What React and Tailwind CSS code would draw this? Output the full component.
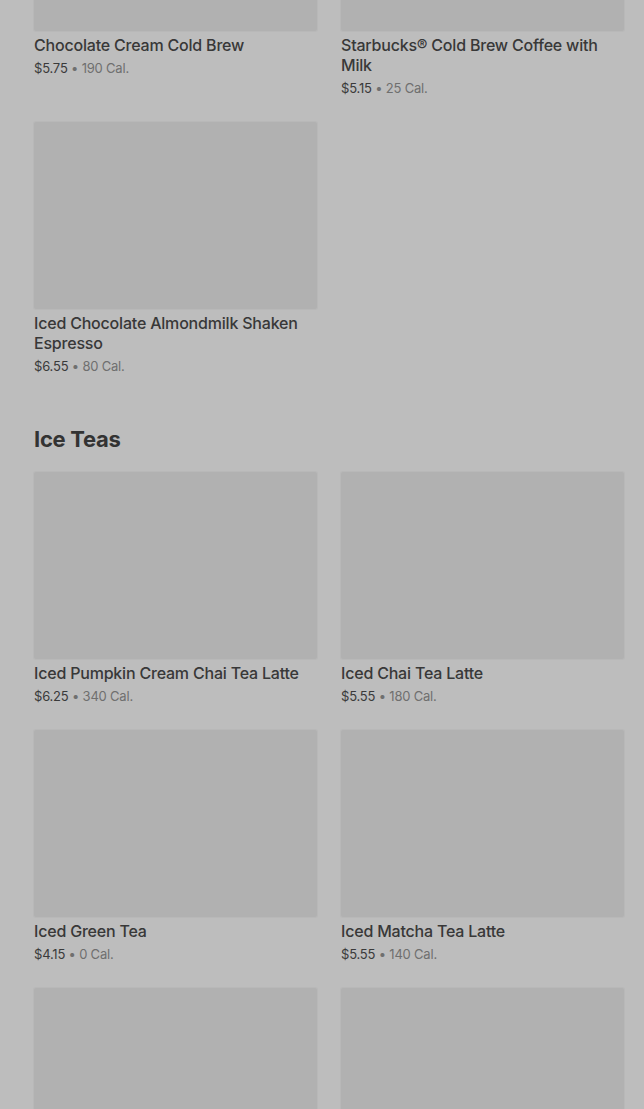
import React from "react";

const sections = [
    {
        title: null,
        items: [
            { name: "Chocolate Cream Cold Brew", price: "$5.75", cal: "190 Cal." },
            { name: "Starbucks® Cold Brew Coffee with Milk", price: "$5.15", cal: "25 Cal." },
            { name: "Iced Chocolate Almondmilk Shaken Espresso", price: "$6.55", cal: "80 Cal." },
        ],
    },
    {
        title: "Ice Teas",
        items: [
            { name: "Iced Pumpkin Cream Chai Tea Latte", price: "$6.25", cal: "340 Cal." },
            { name: "Iced Chai Tea Latte", price: "$5.55", cal: "180 Cal." },
            { name: "Iced Green Tea", price: "$4.15", cal: "0 Cal." },
            { name: "Iced Matcha Tea Latte", price: "$5.55", cal: "140 Cal." },
            { name: "Iced Black Tea", price: "$4.15", cal: "0 Cal." },
            { name: "Iced Peach Green Tea", price: "$4.75", cal: "60 Cal." },
        ],
    },
];

function ItemCard({ item }) {
    return (
        <div className="flex flex-col">
            <div className="h-[187px] w-full rounded-[2px] bg-[#b1b1b1] shadow-[0_0_0_1px_#b8b8b8]" />
            <h3 className="mt-1 text-[16px] leading-5 font-medium text-[#383838] tracking-[-0.2px]">
                {item.name}
            </h3>
            <p className="mt-[3px] text-[13px] leading-5 text-[#3a3a3a] tracking-[-0.2px]">
                {item.price}
                <span className="text-[#6f6f6f]"> • {item.cal}</span>
            </p>
        </div>
    );
}

export default function App() {
    return (
        <div
            className="h-screen bg-[#bdbdbd] overflow-hidden"
            style={{ fontFamily: "Inter, 'Noto Sans', sans-serif" }}
        >
            <div className="-mt-[156px] pl-[34px] pr-[20px]">
                {sections.map((section, i) => (
                    <div key={i} className={i > 0 ? "mt-[49px]" : ""}>
                        {section.title && (
                            <h2 className="mb-[19px] text-[22px] leading-7 font-bold text-[#333333] tracking-[-0.3px]">
                                {section.title}
                            </h2>
                        )}
                        <div className="grid grid-cols-2 gap-x-6 gap-y-6">
                            {section.items.map((item) => (
                                <ItemCard key={item.name} item={item} />
                            ))}
                        </div>
                    </div>
                ))}
            </div>
        </div>
    );
}
